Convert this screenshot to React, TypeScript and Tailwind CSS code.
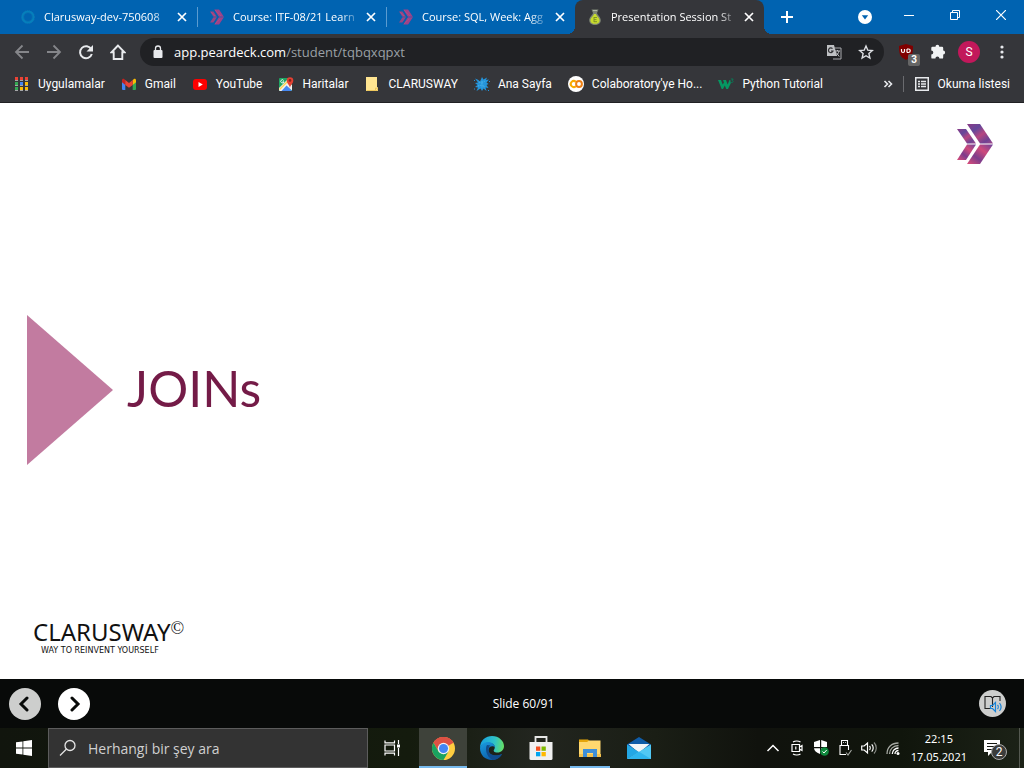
import React from "react";

const UI_FONT = "font-['Roboto','Noto_Sans',sans-serif]";

/* ---------- favicons and bookmark icons ---------- */

function RingIcon() {
  return (
    <svg className="size-4 shrink-0" viewBox="0 0 16 16" fill="none">
      <circle cx="8" cy="8" r="5.3" stroke="#0480bd" strokeWidth="2.6" />
      <circle cx="8" cy="8" r="6.6" stroke="#1b75ae" strokeWidth="0.6" strokeDasharray="1 1" />
      <circle cx="8" cy="8" r="4.4" stroke="#0a6fae" strokeWidth="0.8" />
    </svg>
  );
}

function ArrowFavicon() {
  return (
    <svg className="size-4 shrink-0" viewBox="0 0 16 16">
      <path d="M1 2.5h3.4L8 8l-3.6 5.5H1L4.6 8z" fill="#964684" />
      <path d="M5.3 0.5h4.8L15 8l-4.9 7.5H5.3L10 8z" fill="#9d4389" />
      <path d="M1 8h14" stroke="#0063b1" strokeWidth="0.5" />
      <path d="M6 1l6 6M6 15l5-5M2 3l4 4" stroke="#b44b80" strokeWidth="0.8" />
    </svg>
  );
}

function PearIcon() {
  return (
    <svg className="size-4 shrink-0" viewBox="0 0 16 16">
      <path d="M4.500 .5h7L10 4c.3 2 4 4 3.800 7.500C13.600 14.500 11 16 8 16s-5.600-1.500-5.800-4.500C2 8 5.700 6 6 4z" fill="#7d8474" />
      <path d="M6 1.500h4" stroke="#b1b9a3" strokeWidth="1" />
      <path d="M7 5h2c.4 2.200 3.600 3.700 3.600 6.400 0 2.300-2 3.400-4.600 3.400s-4.600-1.100-4.600-3.400C3.400 8.700 6.600 7.200 7 5z" fill="#c8dc2c" />
      <path d="M7 8v5M7 8.500h3M7 10.600h2.500M7 12.700h3" stroke="#7b8a28" strokeWidth=".9" />
    </svg>
  );
}

function AppsIcon() {
  const rows = [
    ["#ea4335", "#ea4335", "#ea4335"],
    ["#34a853", "#4285f4", "#fbbc04"],
    ["#34a853", "#fbbc04", "#fbbc04"],
  ];
  return (
    <svg className="size-4 shrink-0" viewBox="0 0 16 16">
      {rows.map((row, y) =>
        row.map((fill, x) => (
          <g key={x + "-" + y}>
            <rect x={1 + x * 5} y={1 + y * 5} width="3" height="3" fill={fill} />
            <rect x={1 + x * 5} y={4 + y * 5} width="3" height="1" fill="#a5a6a8" />
          </g>
        ))
      )}
    </svg>
  );
}

function GmailIcon() {
  return (
    <svg className="size-4 shrink-0" viewBox="0 0 16 16">
      <path d="M1 4v9a1 1 0 0 0 1 1h2.300V6z" fill="#4285f4" />
      <path d="M15 4v9a1 1 0 0 1-1 1h-2.300V6z" fill="#34a853" />
      <path d="M11.700 4l1-.8C13.700 2.400 15 3 15 4.300v2L11.700 9z" fill="#fbbc04" />
      <path d="M4.300 4l-1-.8C2.300 2.400 1 3 1 4.300v2L4.300 9z" fill="#c5221f" />
      <path d="M4.300 4L8 6.900 11.700 4v5L8 11.700 4.300 9z" fill="#ea4335" />
    </svg>
  );
}

function YouTubeIcon() {
  return (
    <svg className="size-4 shrink-0" viewBox="0 0 16 16">
      <rect x="1" y="3" width="14" height="11" rx="3" fill="#f00" />
      <path d="M6.500 6v5l4.300-2.500z" fill="#fff" />
    </svg>
  );
}

function MapsIcon() {
  return (
    <svg className="size-4 shrink-0" viewBox="0 0 16 16">
      <rect x="1" y="2" width="13" height="13" rx="1" fill="#1fa463" />
      <path d="M2 15L8.500 8.500 14 15z" fill="#4688f1" />
      <path d="M1 14.500V12L9 4l2 3 3 2v5.500L8.500 9.500 3.500 15H2z" fill="#f1f1f1" />
      <path d="M1.500 13.500L9.500 5.500" stroke="#ffd34d" strokeWidth="1.500" />
      <path d="M5.700 4.500a1.600 1.600 0 1 0 .2 1.300H4.500" fill="none" stroke="#fff" strokeWidth=".9" />
      <path d="M12 12c-.2-3-3.300-4.300-3.300-7.500a3.300 3.300 0 0 1 6.600 0C15.300 7.700 12.200 9 12 12z" fill="#e34133" />
      <circle cx="12" cy="4.400" r="1.300" fill="#85221b" />
    </svg>
  );
}

function FolderNoteIcon() {
  return (
    <svg className="size-4 shrink-0" viewBox="0 0 16 16">
      <path d="M2 1h11v10l1 .5V15H2z" fill="#ffe591" />
      <path d="M2.500 14.500h9M11.500 14.500V12l2 .5v2z" fill="none" stroke="#edc75c" />
    </svg>
  );
}

function SplashIcon() {
  return (
    <svg className="size-4 shrink-0" viewBox="0 0 16 16">
      <path d="M1 2.500l3 1.200L6 5.500 8 1l1.500 2.500L13 1.500l-1 2.500 3-.5-2.500 3 2 1.500-2 1L14.500 12l-3-.5 1 3.500-3-2.500L8 15l-1.500-2.500L2.500 15 4 11.500 1 11l2.500-2L1 7l3-.5z" fill="#2494db" />
      <path d="M5 6l3 1 3-2M4 10l4-1 3 2M8 5v7" stroke="#57bdf0" strokeWidth=".8" strokeDasharray="1 .8" fill="none" />
      <path d="M0 4.500h1M0 13h1M15 5.500h1M14 14.500h1" stroke="#2494db" strokeWidth="1" />
    </svg>
  );
}

function ColabIcon() {
  return (
    <svg className="size-4 shrink-0" viewBox="0 0 16 16">
      <circle cx="8" cy="8" r="8" fill="#fff" />
      <path d="M7.800 5.800A3 3 0 1 0 7.800 10.200" fill="none" stroke="#f9ab00" strokeWidth="2" />
      <circle cx="11" cy="8" r="2.900" fill="none" stroke="#ee7f12" strokeWidth="2" />
    </svg>
  );
}

function W3Icon() {
  return (
    <svg className="size-4 shrink-0" viewBox="0 0 16 16">
      <path d="M0 4h3l1.700 4.500L6 6.500 5 4h3l1.600 4.500L11.500 4h.8l.5 3.200L10 13H8.300L6.800 9.500 5 13H3.700z" fill="#059862" />
      <path d="M12.800 3h2.400L14 4.500c1.600 0 1.500 2.300-.8 2" fill="none" stroke="#087e58" strokeWidth=".9" />
    </svg>
  );
}

function ReadingListIcon() {
  return (
    <svg className="size-4" viewBox="0 0 16 16" fill="none" stroke="#e8eaed">
      <rect x="1.750" y="1.750" width="12.500" height="12.500" strokeWidth="1.500" />
      <path d="M4 5.500h2M7 5.500h5M4 8h2M7 8h5M4 10.500h2M7 10.500h5" strokeWidth="1.300" />
    </svg>
  );
}

/* ---------- browser chrome ---------- */

function CloseGlyph() {
  return (
    <svg className="size-3" viewBox="0 0 12 12" stroke="currentColor" strokeWidth="1.700">
      <path d="M2 2l8 8M10 2l-8 8" />
    </svg>
  );
}

type TabProps = { icon: React.ReactNode; title: string; active?: boolean };

function Tab({ icon, title, active }: TabProps) {
  return (
    <div
      className={
        "relative flex h-full max-w-[189px] min-w-0 flex-1 items-center pl-3 pr-[9px] text-white " +
        (active ? "rounded-t-lg bg-[#35363a]" : "")
      }
    >
      {icon}
      <span className="ml-2 min-w-0 flex-1 overflow-hidden whitespace-nowrap font-['Open_Sans',sans-serif] text-[11px] leading-4 [mask-image:linear-gradient(to_right,black_84%,transparent)]">
        {title}
      </span>
      <button aria-label={"Close " + title} className="ml-1 grid size-3 shrink-0 place-items-center">
        <CloseGlyph />
      </button>
      {active && (
        <>
          <span className="absolute -left-2 bottom-0 size-2 bg-[radial-gradient(circle_at_0_0,#0063b1_8px,#35363a_8px)]" />
          <span className="absolute -right-2 bottom-0 size-2 bg-[radial-gradient(circle_at_100%_0,#0063b1_8px,#35363a_8px)]" />
        </>
      )}
    </div>
  );
}

function TabSeparator() {
  return <span className="-mr-px h-5 w-px shrink-0 bg-[#5a9bd0]" />;
}

function TabStrip() {
  return (
    <header className="flex h-[34px] items-center bg-[#0063b1] pl-2 text-white">
      <Tab icon={<RingIcon />} title="Clarusway-dev-750608" />
      <TabSeparator />
      <Tab icon={<ArrowFavicon />} title="Course: ITF-08/21 Learn" />
      <TabSeparator />
      <Tab icon={<ArrowFavicon />} title="Course: SQL, Week: Agg" />
      <Tab icon={<PearIcon />} title="Presentation Session St" active />
      <button aria-label="New tab" className="ml-4 shrink-0">
        <svg className="size-3.5" viewBox="0 0 14 14" stroke="currentColor" strokeWidth="2">
          <path d="M7 1v12M1 7h12" />
        </svg>
      </button>
      <div className="ml-auto flex shrink-0 items-center">
        <button aria-label="Search tabs" className="mr-3.5">
          <svg className="size-3.5" viewBox="0 0 14 14">
            <circle cx="7" cy="7" r="7" fill="#fff" />
            <path d="M3.800 5.300h6.400L7 9.500z" fill="#0063b1" />
          </svg>
        </button>
        <div className="flex h-7 items-center self-start pb-1">
          <button aria-label="Minimize" className="grid w-[46px] place-items-center">
            <svg className="h-3 w-2.5" viewBox="0 0 10 12" stroke="currentColor">
              <path d="M0 6.500h10" />
            </svg>
          </button>
          <button aria-label="Restore" className="grid w-[46px] place-items-center">
            <svg className="size-2.5" viewBox="0 0 10 10" fill="none" stroke="currentColor">
              <path d="M.5 2.500h7v7h-7zM2.500 2.500v-2h7v7h-2" />
            </svg>
          </button>
          <button aria-label="Close window" className="grid w-[46px] place-items-center">
            <svg className="size-2.5" viewBox="0 0 10 10" stroke="currentColor" strokeWidth="1.200">
              <path d="M0 0l10 10M10 0L0 10" />
            </svg>
          </button>
        </div>
      </div>
    </header>
  );
}

function Toolbar() {
  return (
    <nav className="flex h-9 items-center bg-[#35363a] text-[#e8eaed]">
      <div className="flex w-[140px] shrink-0 items-center gap-4 pl-3.5">
        <button aria-label="Back" className="text-[#85868a]">
          <svg className="size-4" viewBox="0 0 16 16" fill="none" stroke="currentColor" strokeWidth="1.800">
            <path d="M15 8H2M8.500 1.500L2 8l6.500 6.500" />
          </svg>
        </button>
        <button aria-label="Forward" className="text-[#85868a]">
          <svg className="size-4" viewBox="0 0 16 16" fill="none" stroke="currentColor" strokeWidth="1.800">
            <path d="M1 8h13M7.500 1.500L14 8l-6.500 6.500" />
          </svg>
        </button>
        <button aria-label="Reload">
          <svg className="size-4" viewBox="0 0 16 16" fill="none" stroke="currentColor" strokeWidth="2">
            <path d="M13.300 5.300A6 6 0 1 0 13.800 10" />
            <path d="M15 1v6.500H8.500z" fill="currentColor" stroke="none" />
          </svg>
        </button>
        <button aria-label="Home">
          <svg className="size-4" viewBox="0 0 16 16" fill="none" stroke="currentColor" strokeWidth="1.900">
            <path d="M8 1.500L1.500 8.300h2.200V15h8.600V8.300h2.200z" />
          </svg>
        </button>
      </div>
      <div className="flex h-7 min-w-0 flex-1 items-center rounded-full bg-[#202124] pl-3 pr-2.5">
        <svg className="h-3.5 w-3 shrink-0" viewBox="0 0 12 14">
          <rect x="1.500" y="5" width="9" height="8" rx="1" fill="#e8eaed" />
          <path d="M3.500 5V3.500a2.500 2.500 0 0 1 5 0V5" fill="none" stroke="#e8eaed" strokeWidth="1.300" />
        </svg>
        <p className="ml-2.5 flex-1 truncate font-['Open_Sans',sans-serif] text-[13px] leading-5 text-[#9aa0a6]">
          <span className="text-white">app.peardeck.com</span>/student/tqbqxqpxt
        </p>
        <button aria-label="Translate" className="mr-4">
          <svg className="size-4" viewBox="0 0 16 16" fill="none">
            <path d="M1 1h7l3 11H1z" fill="#bfc1c4" />
            <path d="M8 4h7v11H7" stroke="#a9abae" />
            <path d="M6.500 4.700A2.300 2.300 0 1 0 7 7H5" stroke="#303134" strokeWidth="1.200" />
            <path d="M9 7h5M11.500 6v1M13 7c-.3 2-2 4-3 5M10.200 8.500l3 4" stroke="#bfc1c4" />
          </svg>
        </button>
        <button aria-label="Bookmark this page">
          <svg className="size-4" viewBox="0 0 16 16" fill="none" stroke="#dfe1e5" strokeWidth="1.400">
            <path d="M8 2l1.800 4.200 4.500.4-3.400 3 1 4.400L8 11.700 4.100 14l1-4.400-3.400-3 4.500-.4z" />
          </svg>
        </button>
      </div>
      <div className="flex shrink-0 items-center pl-3.5 pr-3.5">
        <button aria-label="Ad blocker" className="relative mr-4">
          <svg className="size-4" viewBox="0 0 16 16">
            <path d="M8 0l7 2c0 8-1 11-7 14C2 13 1 10 1 2z" fill="#800000" />
            <path d="M3.500 5v2a1.500 1.500 0 0 0 3 0V5M9 5v3.500M9 5h1.500a1.700 1.700 0 0 1 0 3.500H9" fill="none" stroke="#fff" strokeWidth="1.200" />
          </svg>
          <span className="absolute left-2.5 top-2.5 grid h-3 w-3 place-items-center rounded-xs bg-[#666] text-[10px] font-bold leading-3 text-white">
            3
          </span>
        </button>
        <button aria-label="Extensions" className="mr-3">
          <svg className="size-4" viewBox="0 0 16 16" fill="#f1f3f4">
            <path d="M5.500 2.700a1.900 1.900 0 0 1 3.800 0H12a1.200 1.200 0 0 1 1.200 1.200v2.700a1.900 1.900 0 0 1 0 3.800v3A1.200 1.200 0 0 1 12 14.600H9.400a2 2 0 0 0-4 0H2.500a1.200 1.200 0 0 1-1.200-1.200v-2.800a2 2 0 0 0 0-4V3.900a1.200 1.200 0 0 1 1.200-1.200z" />
          </svg>
        </button>
        <button aria-label="Profile" className="mr-3.5 grid size-[22px] place-items-center rounded-full bg-[#c2185b] text-xs text-white">
          S
        </button>
        <button aria-label="Menu">
          <svg className="h-4 w-4" viewBox="0 0 16 16" fill="#e8eaed">
            <circle cx="8" cy="3" r="1.600" />
            <circle cx="8" cy="8" r="1.600" />
            <circle cx="8" cy="13" r="1.600" />
          </svg>
        </button>
      </div>
    </nav>
  );
}

const bookmarks = [
  { label: "Uygulamalar", icon: <AppsIcon /> },
  { label: "Gmail", icon: <GmailIcon /> },
  { label: "YouTube", icon: <YouTubeIcon /> },
  { label: "Haritalar", icon: <MapsIcon /> },
  { label: "CLARUSWAY", icon: <FolderNoteIcon /> },
  { label: "Ana Sayfa", icon: <SplashIcon /> },
  { label: "Colaboratory'ye Ho...", icon: <ColabIcon /> },
  { label: "Python Tutorial", icon: <W3Icon /> },
];

function BookmarksBar() {
  return (
    <nav className="flex h-[33px] items-center border-b border-[#202124] bg-[#35363a] pb-1 pl-3.5 pr-3.5 text-xs text-white">
      <div className="flex min-w-0 flex-1 items-center gap-4 overflow-hidden">
        {bookmarks.map((b) => (
          <a key={b.label} href="#" className="flex shrink-0 items-center gap-2 whitespace-nowrap">
            {b.icon}
            {b.label}
          </a>
        ))}
      </div>
      <button aria-label="More bookmarks" className="mr-2.5">
        <svg className="h-2.5 w-2.5" viewBox="0 0 10 10" fill="none" stroke="#e8eaed" strokeWidth="1.600">
          <path d="M1.500 2l3 3-3 3M5.500 2l3 3-3 3" />
        </svg>
      </button>
      <span className="mr-2.5 h-4 w-px bg-[#6a6b6f]" />
      <button className="flex items-center gap-2">
        <ReadingListIcon />
        Okuma listesi
      </button>
    </nav>
  );
}

/* ---------- slide ---------- */

function BrandMark() {
  return (
    <svg className="h-10 w-9" viewBox="0 0 36 40">
      <defs>
        <linearGradient id="upper" x1="0" y1="0" x2="1" y2="1">
          <stop offset="0" stopColor="#8c3a86" />
          <stop offset=".3" stopColor="#64479a" />
          <stop offset=".55" stopColor="#b64680" />
          <stop offset=".8" stopColor="#6e4294" />
          <stop offset="1" stopColor="#a44888" />
        </linearGradient>
        <linearGradient id="lower" x1="1" y1="0" x2="0" y2="1">
          <stop offset="0" stopColor="#6b439b" />
          <stop offset=".35" stopColor="#cf4a7c" />
          <stop offset=".65" stopColor="#7c3d8c" />
          <stop offset="1" stopColor="#e04d78" />
        </linearGradient>
      </defs>
      <path d="M0 5h9l10 14.500h-9z" fill="url(#upper)" />
      <path d="M10 20.500h9L9 36H0z" fill="url(#lower)" />
      <path d="M10 0h13l13 19.500H23z" fill="url(#upper)" />
      <path d="M23 20.500h13L23 40H10z" fill="url(#lower)" />
    </svg>
  );
}

function Slide() {
  return (
    <main className="flex flex-1 flex-col justify-between bg-white pb-[21px] pl-[27px] pr-[31px] pt-[21px]">
      <div className="flex justify-end">
        <BrandMark />
      </div>
      <div className="flex items-center gap-3.5 pb-1">
        <svg className="h-[150px] w-[86px]" viewBox="0 0 86 150">
          <path d="M0 0l86 75L0 150z" fill="#c27ba0" />
        </svg>
        <h1 className="pb-1 font-[Lato,sans-serif] text-[50px] leading-[60px] text-[#741b47]">JOINs</h1>
      </div>
      <div className="ml-1.5 flex flex-col text-[#111]">
        <div className="flex items-start">
          <span className="font-['Noto_Sans',sans-serif] text-[24px] leading-6">CLARUSWAY</span>
          <span className="font-['Liberation_Serif',serif] text-[18px] leading-4">©</span>
        </div>
        <span className="ml-2 font-['DejaVu_Sans',sans-serif] text-[8px] leading-[14px]">WAY TO REINVENT YOURSELF</span>
      </div>
    </main>
  );
}

function SlideControls() {
  return (
    <section className="grid h-[49px] grid-cols-3 items-center bg-[#080a09] pl-[9px] pr-[18px] text-white">
      <div className="flex gap-[17px]">
        <button aria-label="Previous slide" className="grid size-8 place-items-center rounded-full bg-[#cdcecd]">
          <svg className="size-4" viewBox="0 0 16 16" fill="none" stroke="#080a09" strokeWidth="3" strokeLinecap="round">
            <path d="M10 2L4 8l6 6" />
          </svg>
        </button>
        <button aria-label="Next slide" className="grid size-8 place-items-center rounded-full bg-white">
          <svg className="size-4" viewBox="0 0 16 16" fill="none" stroke="#080a09" strokeWidth="3" strokeLinecap="round">
            <path d="M6 2l6 6-6 6" />
          </svg>
        </button>
      </div>
      <p className="pl-8 text-center font-['Open_Sans',sans-serif] text-xs font-medium">Slide 60/91</p>
      <button aria-label="Immersive reader" className="grid size-[27px] place-items-center justify-self-end rounded-full bg-[#cdcecd]">
        <svg className="size-5" viewBox="0 0 20 20" fill="none">
          <path d="M8 14.500H2v-12h6l1.500 1.500v9M9.500 4L11 2.500h6V7" stroke="#222" strokeWidth="1.100" />
          <path d="M7.500 11.500h2l3-3v9l-3-3h-2zM14.500 11c1 1 1 3 0 4M16.500 9c2 2.500 2 5.500 0 8" stroke="#1683d8" strokeWidth="1.200" />
        </svg>
      </button>
    </section>
  );
}

/* ---------- taskbar ---------- */

function TaskViewIcon() {
  return (
    <svg className="h-4 w-[17px]" viewBox="0 0 17 16" fill="none" stroke="#fff" strokeWidth="1.200">
      <path d="M1 .5v2.300h9.500V.5M1 15.500v-2.300h9.500v2.300M1 5h9.500v6H1zM14.500 0v4M14.500 8v8" />
      <path d="M13 4.500h3v3h-3z" fill="#fff" stroke="none" />
    </svg>
  );
}

function ChromeIcon() {
  return (
    <svg className="size-[23px]" viewBox="0 0 24 24">
      <circle cx="12" cy="12" r="12" fill="#ffcd40" />
      <path d="M12 12L1.600 6A12 12 0 0 1 22.400 6z" fill="#dd5144" />
      <path d="M12 6h10.400A12 12 0 0 0 1.600 6l5.200 9z" fill="#dd5144" />
      <path d="M1.600 6A12 12 0 0 0 12 24l5.200-9-5.200 3-5.200-3z" fill="#1aa260" />
      <circle cx="12" cy="12" r="6" fill="#f1f1f1" />
      <circle cx="12" cy="12" r="4.700" fill="#4285f4" />
    </svg>
  );
}

function EdgeIcon() {
  return (
    <svg className="size-6" viewBox="0 0 24 24">
      <defs>
        <linearGradient id="edgeTop" x1="0" y1=".4" x2="1" y2=".5">
          <stop offset="0" stopColor="#179fe0" />
          <stop offset=".6" stopColor="#2fc3c8" />
          <stop offset="1" stopColor="#66df65" />
        </linearGradient>
        <linearGradient id="edgeBody" x1="0" y1="0" x2=".6" y2="1">
          <stop offset="0" stopColor="#1a9de0" />
          <stop offset="1" stopColor="#0b5ba8" />
        </linearGradient>
      </defs>
      <path d="M0 12C0 4 6 0 12 0c7 0 12 5 12 10 0 4-3 6.500-6.500 6.500-3.500 0-4.500-1.500-3.300-3 1.600-2.300.3-6.500-4.700-6.500C4 7 1 9 0 12z" fill="url(#edgeTop)" />
      <path d="M0 12c1-4 4.500-6 8-6 4 0 7 2.700 7 5.500-1.500-2-6-2-6.500 2.200-.4 5 6.500 7.800 13.500 4.300C20 21.500 16.500 24 12 24 5 24 0 19 0 12z" fill="url(#edgeBody)" />
      <path d="M7 9C5 12 5.500 20 12.500 24 17 24 20.500 21.300 22 18c-6 3-13.500 1-13.500-4.300C8.500 12 9 10.500 10.500 9.500z" fill="#104c8d" />
    </svg>
  );
}

function StoreIcon() {
  return (
    <svg className="h-6 w-6" viewBox="0 0 24 24">
      <path d="M6.500 7V1h11v6" fill="none" stroke="#e7e7e7" strokeWidth="1.800" />
      <path d="M.5 6h23v16.500A1.500 1.500 0 0 1 22 24H2A1.500 1.500 0 0 1 .5 22.500z" fill="#f0f0f0" />
      <rect x="7" y="10.500" width="4.300" height="4.300" fill="#f25022" />
      <rect x="12.500" y="10.500" width="4.300" height="4.300" fill="#7fba00" />
      <rect x="7" y="16" width="4.300" height="4.300" fill="#00a4ef" />
      <rect x="12.500" y="16" width="4.300" height="4.300" fill="#ffb900" />
    </svg>
  );
}

function ExplorerIcon() {
  return (
    <svg className="h-5 w-[22px]" viewBox="0 0 22 20">
      <path d="M0 1.500h9l2 2h10V5H0z" fill="#e5a50a" />
      <path d="M0 4h8l2-1.500h11.500V19H0z" fill="#ffd86f" />
      <path d="M0 16h22v3H0z" fill="#f3c14d" />
      <path d="M4 11h14v8h-4v-4H8v4H4z" fill="#3e8fd8" />
    </svg>
  );
}

function MailIcon() {
  return (
    <svg className="h-[22px] w-6" viewBox="0 0 24 22">
      <path d="M0 7.500L12 0l12 7.500v4H0z" fill="#0f5ca8" />
      <path d="M1.500 7h21L12 16z" fill="#f2f5f7" />
      <path d="M0 7.500l12 7.500L0 22z" fill="#23a7e5" />
      <path d="M24 7.500L0 22h24z" fill="#51c8f4" />
      <path d="M0 22l12-7.200L24 22z" fill="#2fb5ee" />
    </svg>
  );
}

const apps = [
  { label: "Chrome", icon: <ChromeIcon />, tone: "bg-[#3e423a]", line: "w-full bg-[#76b9ed]" },
  { label: "Edge", icon: <EdgeIcon />, tone: "", line: "" },
  { label: "Store", icon: <StoreIcon />, tone: "", line: "" },
  { label: "Explorer", icon: <ExplorerIcon />, tone: "", line: "w-10 bg-[#76b9ed]" },
  { label: "Mail", icon: <MailIcon />, tone: "", line: "" },
];

function Tray() {
  return (
    <div className="ml-auto flex h-full items-center text-white">
      <div className="flex items-center gap-2 pr-2.5">
        <svg className="size-4" viewBox="0 0 16 16" fill="none" stroke="currentColor" strokeWidth="1.500">
          <path d="M2.500 11L8 5.500l5.500 5.500" />
        </svg>
        <svg className="size-4" viewBox="0 0 16 16" fill="none" stroke="currentColor" strokeWidth="1.200">
          <path d="M3 4.500h7.500v7H3zM10.500 7l2.500-1.500v5L10.500 9M4 2c2-1.300 5.500-1.300 7.500 0M4 14c2 1.300 5.500 1.300 7.500 0M6.800 6.500v3" />
        </svg>
        <svg className="size-4" viewBox="0 0 16 16">
          <path d="M7 0L1 2v5h6zM8.200 0L14 2v5H8.200zM1 8.200h6V14C3 12.500 1.300 10.500 1 8.200zM8.200 8.200H14c-.3 2.500-2.500 5-5.800 6z" fill="#fff" />
          <circle cx="11.500" cy="11.500" r="4.300" fill="#10893e" />
          <path d="M9.500 11.500l1.500 1.500 2.700-3" fill="none" stroke="#fff" />
        </svg>
        <svg className="size-4" viewBox="0 0 16 16" fill="none" stroke="currentColor" strokeWidth="1.100">
          <path d="M4.500 5V.5h6V5M3 5.500h8.500V10M3 5v9.500h6M6 2.500h.8M8.300 2.500H9" />
          <path d="M9 12.500l2 2.500 3.500-5" stroke="#a5a8a3" />
        </svg>
        <svg className="size-4" viewBox="0 0 16 16" fill="none" stroke="currentColor" strokeWidth="1.200">
          <path d="M.7 6h2.500L6.500 3v10L3.200 10H.7zM8.500 6c1 1 1 3 0 4M10.700 4.300c2 2 2 5.400 0 7.400" />
          <path d="M13 2.500c3 3 3 8 0 11" stroke="#888b86" />
        </svg>
        <svg className="size-4" viewBox="0 0 16 16" fill="none" stroke="currentColor" strokeWidth="1.300">
          <path d="M2 14C2 7.500 6.500 3 13.500 3M4.500 14c0-5 4-8.500 9-8.500" stroke="#a6a9a3" />
          <path d="M7.300 14c0-3.500 2.700-6 6.200-6M10 14c0-1.800 1.500-3.500 3.500-3.500" />
          <circle cx="13" cy="13.500" r="1.500" fill="currentColor" stroke="none" />
        </svg>
      </div>
      <div className="whitespace-nowrap text-center font-['Noto_Sans',sans-serif] text-[11px] leading-[18px]">
        <div>22:15</div>
        <div>17.05.2021</div>
      </div>
      <button aria-label="Notifications" className="relative ml-4 mr-3 h-6 w-6">
        <svg className="size-[18px]" viewBox="0 0 18 18">
          <path d="M1 1h16v12H9l-4 4v-4H1z" fill="#fff" />
          <path d="M4 4.500h10M4 7.500h10M4 10.500h7" stroke="#151812" />
        </svg>
        <span className="absolute left-2 top-2 grid size-4 place-items-center rounded-full border border-[#aaa] bg-[#3b3c3b] text-xs leading-none">
          2
        </span>
      </button>
      <span className="mr-1 h-full w-px bg-[#555951]" />
    </div>
  );
}

function Taskbar() {
  return (
    <footer className="flex h-10 items-center bg-[linear-gradient(90deg,#11150d_0%,#141b0d_40%,#22251f_52%,#1a1e15_64%,#10120d_74%,#10150c_88%,#1c2217_100%)]">
      <button aria-label="Start" className="grid h-full w-12 shrink-0 place-items-center">
        <svg className="size-4" viewBox="0 0 16 16" fill="#fff">
          <path d="M0 2.300L6.500 1.400v6.200H0zM7.300 1.300L16 0v7.600H7.300zM0 8.400h6.500v6.200L0 13.700zM7.300 8.400H16V16l-8.700-1.300z" />
        </svg>
      </button>
      <label className="flex h-full w-80 shrink-0 items-center border border-[#5c5c5c] bg-[#333] pl-2.5">
        <svg className="size-[18px]" viewBox="0 0 18 18" fill="none" stroke="#e5e5e5" strokeWidth="1.300">
          <circle cx="11" cy="6.500" r="5" />
          <path d="M7.500 10L1 16.500" />
        </svg>
        <input
          aria-label="Search"
          placeholder="Herhangi bir şey ara"
          className="ml-[11px] min-w-0 flex-1 bg-transparent font-['Open_Sans',sans-serif] text-[14px] outline-none placeholder:text-[#d0d0d0]"
        />
      </label>
      <button aria-label="Task view" className="grid h-full w-[51px] shrink-0 place-items-center pr-0.5">
        <TaskViewIcon />
      </button>
      <div className="flex h-full gap-px">
        {apps.map((a) => (
          <button key={a.label} aria-label={a.label} className={"flex h-full w-12 flex-col items-center " + a.tone}>
            <span className="grid flex-1 place-items-center pt-0.5">{a.icon}</span>
            <span className={"h-0.5 " + a.line} />
          </button>
        ))}
      </div>
      <Tray />
    </footer>
  );
}

export default function App() {
  return (
    <div className={"flex min-h-screen flex-col overflow-hidden " + UI_FONT}>
      <TabStrip />
      <Toolbar />
      <BookmarksBar />
      <Slide />
      <SlideControls />
      <Taskbar />
    </div>
  );
}
